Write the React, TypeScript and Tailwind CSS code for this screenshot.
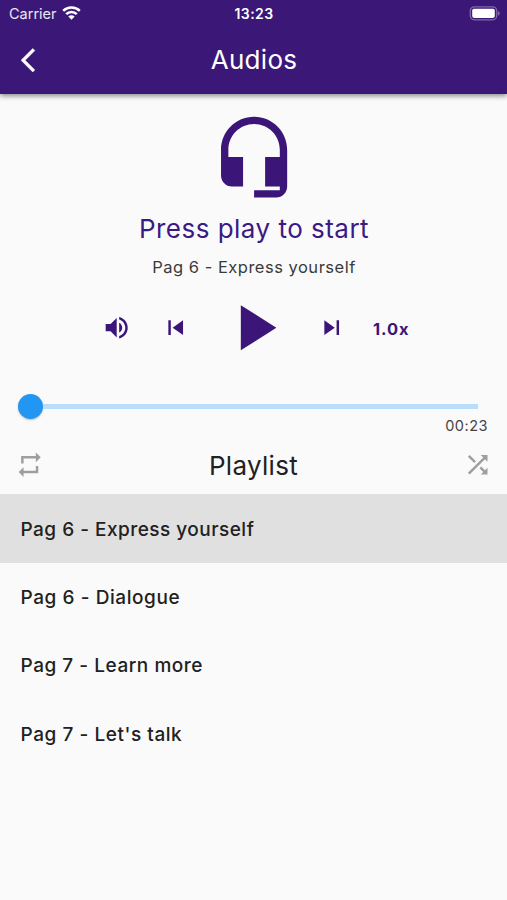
import type { ReactNode } from 'react';

const playlist = [
    { id: 1, title: 'Pag 6 - Express yourself', spacing: 'tracking-[0.48px]' },
    { id: 2, title: 'Pag 6 - Dialogue', spacing: 'tracking-[0.57px]' },
    { id: 3, title: 'Pag 7 - Learn more', spacing: 'tracking-[0.53px]' },
    { id: 4, title: "Pag 7 - Let's talk", spacing: 'tracking-[0.55px]' },
];

function Icon({ className, children }: { className: string; children: ReactNode }) {
    return (
        <svg viewBox="0 0 24 24" fill="currentColor" className={`block shrink-0 ${className}`}>
            {children}
        </svg>
    );
}

function StatusBar() {
    return (
        <div className="grid h-[27px] grid-cols-3 items-center pl-[8px] pr-[7px] text-white">
            <div className="flex items-center gap-[5px] pl-px">
                <span className="pt-px text-[14.5px] leading-none text-white/90">Carrier</span>
                <svg viewBox="0 0 19 14" className="-mt-[1px] h-[14px] w-[19px]" fill="none" stroke="currentColor" strokeWidth="2.5">
                    <path d="M1.2 4.9a11.8 11.8 0 0 1 16.6 0" />
                    <path d="M4.2 8.1a7.5 7.5 0 0 1 10.6 0" />
                    <path d="M9.5 13.8 6.3 10.6a4.6 4.6 0 0 1 6.4 0z" fill="currentColor" stroke="none" />
                </svg>
            </div>
            <span className="pt-px text-center text-[14px] font-semibold leading-none tracking-[0.4px]">13:23</span>
            <svg viewBox="0 0 31 15" className="h-[15px] w-[31px] justify-self-end">
                <rect x="1.3" y="0.8" width="26.4" height="13" rx="4" fill="none" stroke="#fff" strokeOpacity="0.35" strokeWidth="1.3" />
                <rect x="3.2" y="2.7" width="22.6" height="9.2" rx="1.8" fill="#fff" />
                <path d="M29.1 5v4.6c1-.4 1.5-1.3 1.5-2.3s-.5-1.9-1.5-2.3z" fill="#fff" fillOpacity="0.4" />
            </svg>
        </div>
    );
}

function Header() {
    return (
        <header className="relative z-10 h-[94px] bg-[#3b1878] text-white shadow-[0_2px_5px_rgba(0,0,0,0.45)]">
            <StatusBar />
            <div className="grid h-[67px] grid-cols-[60px_1fr_60px] items-center">
                <button className="pl-[20.5px]" aria-label="Back">
                    <Icon className="-mt-[1.5px] h-[28.5px] w-[28.5px]">
                        <path d="M11.67 3.87 9.9 2.1 0 12l9.9 9.9 1.77-1.77L3.54 12z" stroke="currentColor" strokeWidth="0.4" />
                    </Icon>
                </button>
                <h1 className="-mt-px pl-px text-center text-[26px] leading-none tracking-[0.3px]">Audios</h1>
            </div>
        </header>
    );
}

function Controls() {
    return (
        <div className="flex h-[78px] items-center pl-[102px] text-[#3b1578]">
            <Icon className="h-[29.4px] w-[29.4px]">
                <path d="M3 9v6h4l5 5V4L7 9H3zm13.5 3c0-1.77-1.02-3.29-2.5-4.03v8.05c1.48-.73 2.5-2.25 2.5-4.02zM14 3.23v2.06c2.89.86 5 3.54 5 6.71s-2.11 5.85-5 6.71v2.06c4.01-.91 7-4.49 7-8.77s-2.99-7.86-7-8.77z" />
            </Icon>
            <Icon className="ml-[29.4px] h-[29.4px] w-[29.4px]">
                <path d="M6 6h2v12H6zm3.5 6 8.5 6V6z" />
            </Icon>
            <Icon className="ml-[24.5px] h-[77.5px] w-[77.5px]">
                <path d="M8 5v14l11-7z" />
            </Icon>
            <Icon className="ml-[24.5px] h-[29.4px] w-[29.4px]">
                <path d="m6 18 8.5-6L6 6v12zM16 6v12h2V6h-2z" />
            </Icon>
            <span className="ml-[27px] pt-[2px] text-[16.5px] font-bold leading-none tracking-[0.9px]">1.0x</span>
        </div>
    );
}

export default function App() {
    return (
        <div className="h-[900px] w-full overflow-hidden bg-[#fafafa] font-['Inter',sans-serif] text-[#212121]">
            <Header />

            {/* Now playing */}
            <section className="flex flex-col items-center pt-[19px] text-center">
                <Icon className="ml-px h-[88.2px] w-[88.2px] text-[#3b1578]">
                    <path d="M12 1c-4.97 0-9 4.03-9 9v7c0 1.66 1.34 3 3 3h3v-8H5v-2c0-3.87 3.13-7 7-7s7 3.13 7 7v2h-4v8h4v1h-7v2h6c1.66 0 3-1.34 3-3V10c0-4.97-4.03-9-9-9z" />
                </Icon>
                <h2 className="mt-[10px] h-[36px] pl-px text-[26px] leading-[36px] tracking-[0.48px] text-[#3b1a85]">Press play to start</h2>
                <p className="mt-[10px] h-[20px] pl-px text-[16.5px] leading-[20px] tracking-[0.5px] text-[#3a3a3a]">Pag 6 - Express yourself</p>
            </section>

            <div className="mt-[12px]">
                <Controls />
            </div>

            {/* Progress */}
            <div className="mt-[27px] flex h-[25px] items-center pl-[18px] pr-[29px]">
                <div className="h-[25px] w-[25px] shrink-0 rounded-full bg-[#2196f3] shadow-[0_1px_2px_rgba(0,0,0,0.25)]" />
                <div className="h-[5px] flex-1 bg-[#badefa]" />
            </div>
            <div className="h-[14px] pr-[19px] text-right text-[14.5px] leading-[14px] tracking-[0.5px] text-[#444]">00:23</div>

            {/* Playlist */}
            <div className="flex h-[61px] items-center justify-between px-[15px] pt-[3px]">
                <Icon className="h-[29.4px] w-[29.4px] text-[#9e9e9e]">
                    <path d="M7 7h10v3l4-4-4-4v3H5v6h2V7zm10 10H7v-3l-4 4 4 4v-3h12v-6h-2v4z" />
                </Icon>
                <h2 className="pt-[2px] text-[26px] leading-none tracking-[0.3px]">Playlist</h2>
                <Icon className="h-[29.4px] w-[29.4px] text-[#9e9e9e]">
                    <path d="M10.59 9.17 5.41 4 4 5.41l5.17 5.17 1.42-1.41zM14.5 4l2.04 2.04L4 18.59 5.41 20 17.96 7.46 20 9.5V4h-5.5zm.33 9.41-1.41 1.41 3.13 3.13L14.5 20H20v-5.5l-2.04 2.04-3.13-3.13z" />
                </Icon>
            </div>
            <ul>
                {playlist.map((track, index) => (
                    <li
                        key={track.id}
                        className={`flex h-[68.4px] items-center pl-[20.5px] pt-[3px] text-[19px] font-medium ${track.spacing} ${index === 0 ? 'bg-[#e0e0e0]' : ''}`}
                    >
                        {track.title}
                    </li>
                ))}
            </ul>
        </div>
    );
}
